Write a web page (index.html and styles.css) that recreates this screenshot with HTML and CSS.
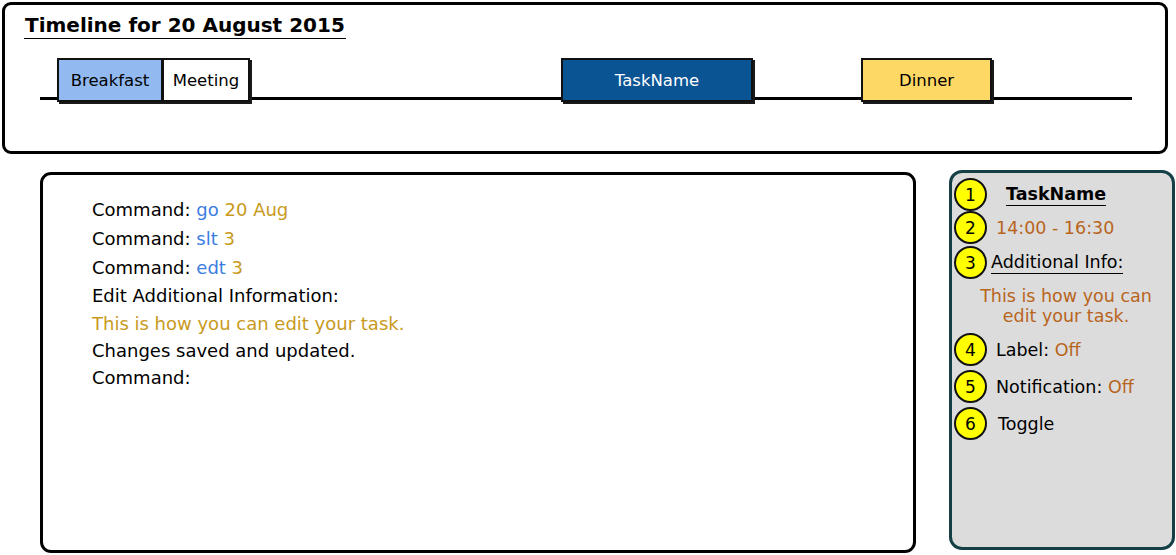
FILE: index.html
```html
<!DOCTYPE html>
<html>
<head>
<meta charset="utf-8">
<link rel="stylesheet" href="styles.css">
</head>
<body>
<div class="page">
  <section class="timeline">
    <h1 class="title">Timeline for 20 August 2015</h1>
    <div class="track">
      <div class="task task-breakfast">Breakfast</div>
      <div class="task task-meeting">Meeting</div>
      <div class="task task-main">TaskName</div>
      <div class="task task-dinner">Dinner</div>
    </div>
  </section>
  <div class="bottom">
    <section class="console">
      <div class="line l-wide">Command: <span class="cmd">go</span> <span class="arg">20 Aug</span></div>
      <div class="line l-wide">Command: <span class="cmd">slt</span> <span class="arg">3</span></div>
      <div class="line">Command: <span class="cmd">edt</span> <span class="arg">3</span></div>
      <div class="line">Edit Additional Information:</div>
      <div class="line l-tight arg">This is how you can edit your task.</div>
      <div class="line l-tight">Changes saved and updated.</div>
      <div class="line">Command:</div>
    </section>
    <aside class="panel">
      <div class="row row-1"><span class="num">1</span><span class="p-title">TaskName</span></div>
      <div class="row row-2"><span class="num">2</span><span class="val">14:00 - 16:30</span></div>
      <div class="row row-3"><span class="num">3</span><span class="p-sub">Additional Info:</span></div>
      <p class="info val">This is how you can<br>edit your task.</p>
      <div class="row row-4"><span class="num">4</span><span>Label: <span class="val">Off</span></span></div>
      <div class="row row-5"><span class="num">5</span><span>Notification: <span class="val">Off</span></span></div>
      <div class="row row-6"><span class="num">6</span><span class="toggle">Toggle</span></div>
    </aside>
  </div>
</div>
</body>
</html>
```

FILE: styles.css
```css
* { box-sizing: border-box; }
html, body { margin: 0; padding: 0; background: #fff; }
body {
  font-family: "DejaVu Sans", Verdana, sans-serif;
  color: #000;
  width: 1176px;
  height: 555px;
  overflow: hidden;
}
.page { padding: 2px 0 0 2px; }

.timeline {
  width: 1166px;
  height: 152px;
  border: 3px solid #000;
  border-radius: 9px;
  padding: 7px 0 0 0;
}
.title {
  margin: 0 0 0 19px;
  display: inline-block;
  font-size: 20px;
  font-weight: 700;
  line-height: 26px;
  letter-spacing: 0;
  border-bottom: 1.5px solid #000;
  padding: 0 1px 0 1px;
}
.track {
  margin: 19px 0 0 35px;
  width: 1092px;
  height: 46px;
  display: flex;
  align-items: flex-start;
  background: linear-gradient(#000, #000) no-repeat 0 39px / 100% 3px;
}
.task {
  height: 44px;
  border: 2px solid #111;
  box-shadow: 2px 2px 0 #1a1a1a;
  display: flex;
  align-items: center;
  justify-content: center;
  font-size: 16.5px;
}
.task-breakfast { margin-left: 17px; width: 106px; background: #92baf1; }
.task-meeting { width: 88px; background: #fff; margin-left: -1px; }
.task-main { margin-left: 311px; width: 192px; background: #0a5494; color: #fff; }
.task-dinner { margin-left: 108px; width: 131px; background: #fdd865; }

.bottom {
  display: flex;
  align-items: flex-start;
  margin-top: 16px;
}
.console {
  margin: 2px 0 0 38px;
  width: 876px;
  height: 381px;
  border: 3px solid #000;
  border-radius: 11px;
  padding: 23px 0 0 49px;
  font-size: 18px;
}
.line { height: 28px; line-height: 24px; }
.l-wide { height: 29px; }
.l-tight { height: 27px; }
.cmd { color: #3b7de2; }
.arg { color: #c89a1c; }

.panel {
  margin-left: 33px;
  width: 226px;
  height: 380px;
  background: #dcdcdc;
  border: 3px solid #143f45;
  border-radius: 13px;
  padding: 5px 0 0 2px;
  font-size: 17.5px;
}
.row {
  display: flex;
  align-items: center;
  height: 33px;
}
.row-3 { margin-top: 2px; }
.row-5, .row-6 { margin-top: 4px; }
.num {
  flex: none;
  width: 33px;
  height: 33px;
  border-radius: 50%;
  background: #ffff00;
  border: 2px solid #111;
  display: flex;
  align-items: center;
  justify-content: center;
  font-size: 17px;
  margin-right: 9px;
}
.p-title {
  font-weight: 700;
  margin-left: 10px;
  border-bottom: 1.5px solid #000;
  line-height: 21px;
}
.row-3 .num { margin-right: 4px; }
.p-sub { border-bottom: 1.5px solid #000; line-height: 21px; }
.val { color: #b8651c; }
.info {
  margin: 7px 0 7px 0;
  text-align: center;
  line-height: 20px;
  padding-left: 6px;
}
.toggle { margin-left: 2px; }
```
